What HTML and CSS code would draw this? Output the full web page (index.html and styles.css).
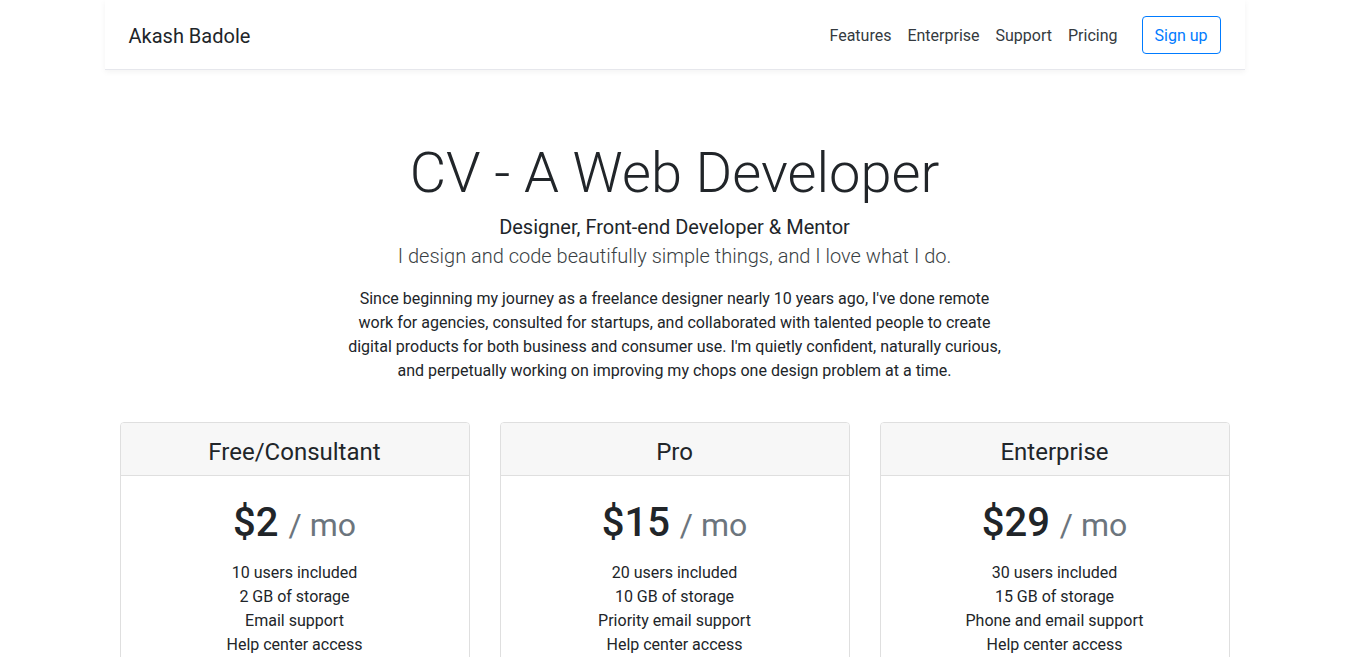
FILE: index.html
```html
<!DOCTYPE html>
<html lang="en">
<head>
<meta charset="utf-8">
<title>Akash Badole - CV</title>
<link rel="stylesheet" href="styles.css">
</head>
<body>
<header class="topbar">
  <h5 class="brand">Akash Badole</h5>
  <nav class="menu">
    <a class="menu-link" href="#">Features</a>
    <a class="menu-link" href="#">Enterprise</a>
    <a class="menu-link" href="#">Support</a>
    <a class="menu-link" href="#">Pricing</a>
  </nav>
  <a class="btn-outline" href="#">Sign up</a>
</header>

<section class="intro">
  <h1 class="display">CV - A Web Developer</h1>
  <h5 class="role">Designer, Front-end Developer &amp; Mentor</h5>
  <p class="lead">I design and code beautifully simple things, and I love what I do.</p>
  <p class="about">Since beginning my journey as a freelance designer nearly 10 years ago, I've done remote work for agencies, consulted for startups, and collaborated with talented people to create digital products for both business and consumer use. I'm quietly confident, naturally curious, and perpetually working on improving my chops one design problem at a time.</p>
</section>

<main class="container">
  <div class="deck">
    <div class="card">
      <div class="card-header"><h4 class="card-name">Free/Consultant</h4></div>
      <div class="card-body">
        <h1 class="price">$2 <small class="per">/ mo</small></h1>
        <ul class="features">
          <li>10 users included</li>
          <li>2 GB of storage</li>
          <li>Email support</li>
          <li>Help center access</li>
        </ul>
        <a class="btn-block btn-outline" href="#">Sign up for free</a>
      </div>
    </div>
    <div class="card">
      <div class="card-header"><h4 class="card-name">Pro</h4></div>
      <div class="card-body">
        <h1 class="price">$15 <small class="per">/ mo</small></h1>
        <ul class="features">
          <li>20 users included</li>
          <li>10 GB of storage</li>
          <li>Priority email support</li>
          <li>Help center access</li>
        </ul>
        <a class="btn-block btn-solid" href="#">Get started</a>
      </div>
    </div>
    <div class="card">
      <div class="card-header"><h4 class="card-name">Enterprise</h4></div>
      <div class="card-body">
        <h1 class="price">$29 <small class="per">/ mo</small></h1>
        <ul class="features">
          <li>30 users included</li>
          <li>15 GB of storage</li>
          <li>Phone and email support</li>
          <li>Help center access</li>
        </ul>
        <a class="btn-block btn-solid" href="#">Contact us</a>
      </div>
    </div>
  </div>
</main>
</body>
</html>
```
FILE: styles.css
```css
html { scrollbar-width: none; }
::-webkit-scrollbar { width: 0; height: 0; }
* { box-sizing: border-box; }
body {
  margin: 0;
  font-family: Roboto, "Liberation Sans", sans-serif;
  font-size: 16px;
  line-height: 24px;
  color: #212529;
  background: #fff;
}
a { text-decoration: none; }

.topbar {
  max-width: 1140px;
  margin: 0 auto;
  height: 70px;
  padding: 16px 24px;
  display: flex;
  align-items: center;
  background: #fff;
  border-bottom: 1px solid #e6e7ec;
  box-shadow: 0 2px 6px rgba(0,0,0,.05);
}
.brand {
  margin: 3px auto 0 0;
  font-size: 20px;
  font-weight: 400;
  line-height: 24px;
  color: #212529;
}
.menu { display: flex; margin-right: 16px; padding-top: 2px; }
.menu-link { padding: 0 8px; color: #343a40; font-size: 16px; line-height: 24px; }
.btn-outline {
  display: inline-block;
  padding: 7px 12px 5px;
  border: 1px solid #007bff;
  border-radius: 4px;
  color: #007bff;
  font-size: 16px;
  line-height: 24px;
}

.intro {
  max-width: 700px;
  margin: 0 auto;
  padding: 70px 16px 0;
  text-align: center;
}
.display {
  margin: 0 0 8px;
  font-size: 56px;
  font-weight: 300;
  line-height: 67px;
}
.role {
  margin: 0;
  font-size: 20px;
  font-weight: 400;
  line-height: 24px;
}
.lead {
  margin: 5px 0 19px;
  font-size: 20px;
  font-weight: 300;
  line-height: 24px;
  color: #3a3f44;
}
.about { margin: 0; }

.container {
  max-width: 1140px;
  margin: 39px auto 0;
  padding: 0 15px;
}
.deck {
  display: grid;
  grid-template-columns: repeat(3, 1fr);
  gap: 30px;
}
.card {
  border: 1px solid #dfdfdf;
  border-radius: 4px;
  text-align: center;
  margin-bottom: 30px;
}
.card-header {
  padding: 15px 20px 8px;
  background: #f7f7f7;
  border-bottom: 1px solid #dfdfdf;
  border-radius: 3px 3px 0 0;
}
.card-name {
  margin: 0;
  font-size: 24px;
  font-weight: 400;
  line-height: 29px;
}
.card-body { padding: 20px; }
.price {
  margin: 0;
  font-size: 40px;
  font-weight: 500;
  line-height: 48px;
  padding-top: 3px;
}
.per { font-size: 32px; font-weight: 400; color: #6c757d; }
.features {
  list-style: none;
  margin: 12px 0 24px;
  padding: 0;
}
.btn-block {
  display: block;
  width: 100%;
  padding: 8px 16px;
  font-size: 20px;
  line-height: 30px;
  border-radius: 5px;
}
.btn-solid { background: #007bff; color: #fff; border: 1px solid #007bff; }
```
